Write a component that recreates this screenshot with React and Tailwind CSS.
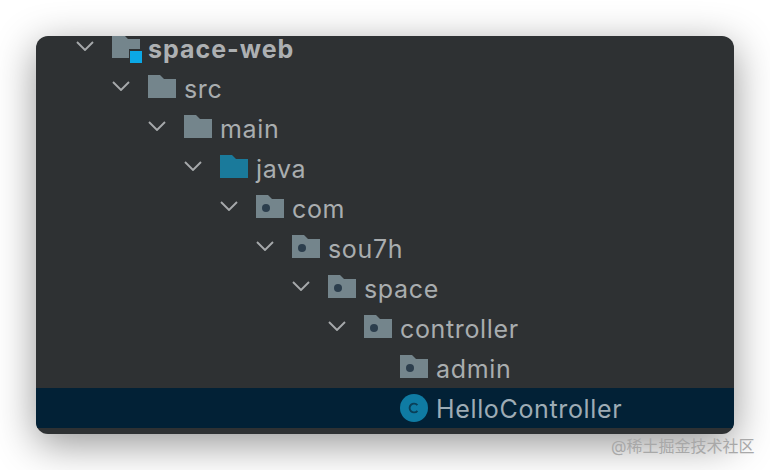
const rows = [
  { name: "space-web", depth: 0, kind: "module", open: true },
  { name: "src", depth: 1, kind: "folder", open: true },
  { name: "main", depth: 2, kind: "folder", open: true },
  { name: "java", depth: 3, kind: "source", open: true },
  { name: "com", depth: 4, kind: "package", open: true },
  { name: "sou7h", depth: 5, kind: "package", open: true },
  { name: "space", depth: 6, kind: "package", open: true },
  { name: "controller", depth: 7, kind: "package", open: true },
  { name: "admin", depth: 8, kind: "package", open: false },
  { name: "HelloController", depth: 8, kind: "class", open: false, selected: true },
];

function Chevron({ open }) {
  return (
    <span className="w-[28px] mr-[13px] shrink-0 flex justify-center -translate-y-[2px]">
      {open && (
        <svg width="18" height="10" viewBox="0 0 18 10" fill="none">
          <path d="M1 1 L9 9 L17 1" stroke="#a6a9ab" strokeWidth="1.9" />
        </svg>
      )}
    </span>
  );
}

function Icon({ kind }) {
  if (kind === "class") {
    return (
      <svg width="28" height="28" viewBox="0 0 28 28" className="shrink-0">
        <circle cx="14" cy="14" r="14" fill="#0f7ba3" />
        <path d="M17.4 11.2 A4.4 4.4 0 1 0 17.4 16.8" fill="none" stroke="#0a3f58" strokeWidth="1.9" />
      </svg>
    );
  }
  const fill = kind === "source" ? "#1a7a9b" : "#74858c";
  return (
    <svg width="28" height="23" viewBox="0 0 28 23" className="shrink-0 -translate-y-[2px]">
      <path d="M0 0 H12 L16 4 H28 V23 H0 Z" fill={fill} />
      {kind === "package" && <circle cx="10" cy="13" r="4" fill="#2c3e4d" />}
      {kind === "module" && <rect x="17" y="14" width="14" height="14" fill="#2e3133" />}
    </svg>
  );
}

function Row({ row }) {
  return (
    <div
      className={`h-[40px] flex items-center ${row.selected ? "bg-[#022136]" : ""}`}
      style={{ paddingLeft: 35 + row.depth * 36 }}
    >
      <Chevron open={row.open} />
      <span className="relative flex">
        <Icon kind={row.kind} />
        {row.kind === "module" && (
          <span className="absolute left-[18px] top-[14px] w-[12px] h-[12px] bg-[#0ba8e6]" />
        )}
      </span>
      <span
        className={`ml-[8px] mt-[2px] text-[25px] leading-[24px] whitespace-nowrap ${
          row.kind === "module"
            ? "font-bold tracking-[1px] text-[#adb0b2]"
            : row.selected
              ? "tracking-[0.65px] text-[#9eacb5]"
              : "tracking-[0.65px] text-[#a9adaf]"
        }`}
      >
        {row.name}
      </span>
    </div>
  );
}

export default function App() {
  return (
    <div className="relative w-[770px] h-[470px] bg-white overflow-hidden font-['Inter','Noto_Sans_CJK_SC',sans-serif]">
      <div className="pt-[36px] px-[36px]">
        <div className="h-[398px] rounded-[12px] bg-[#2e3133] overflow-hidden shadow-[0_10px_40px_rgba(0,0,0,0.42)]">
          <div className="-mt-[8px]">
            {rows.map((r) => (
              <Row key={r.name} row={r} />
            ))}
          </div>
        </div>
      </div>
      <span className="absolute left-[611px] top-[435px] text-[16px] leading-[22px] text-[#a8a8a8] whitespace-nowrap">
        @稀土掘金技术社区
      </span>
    </div>
  );
}
